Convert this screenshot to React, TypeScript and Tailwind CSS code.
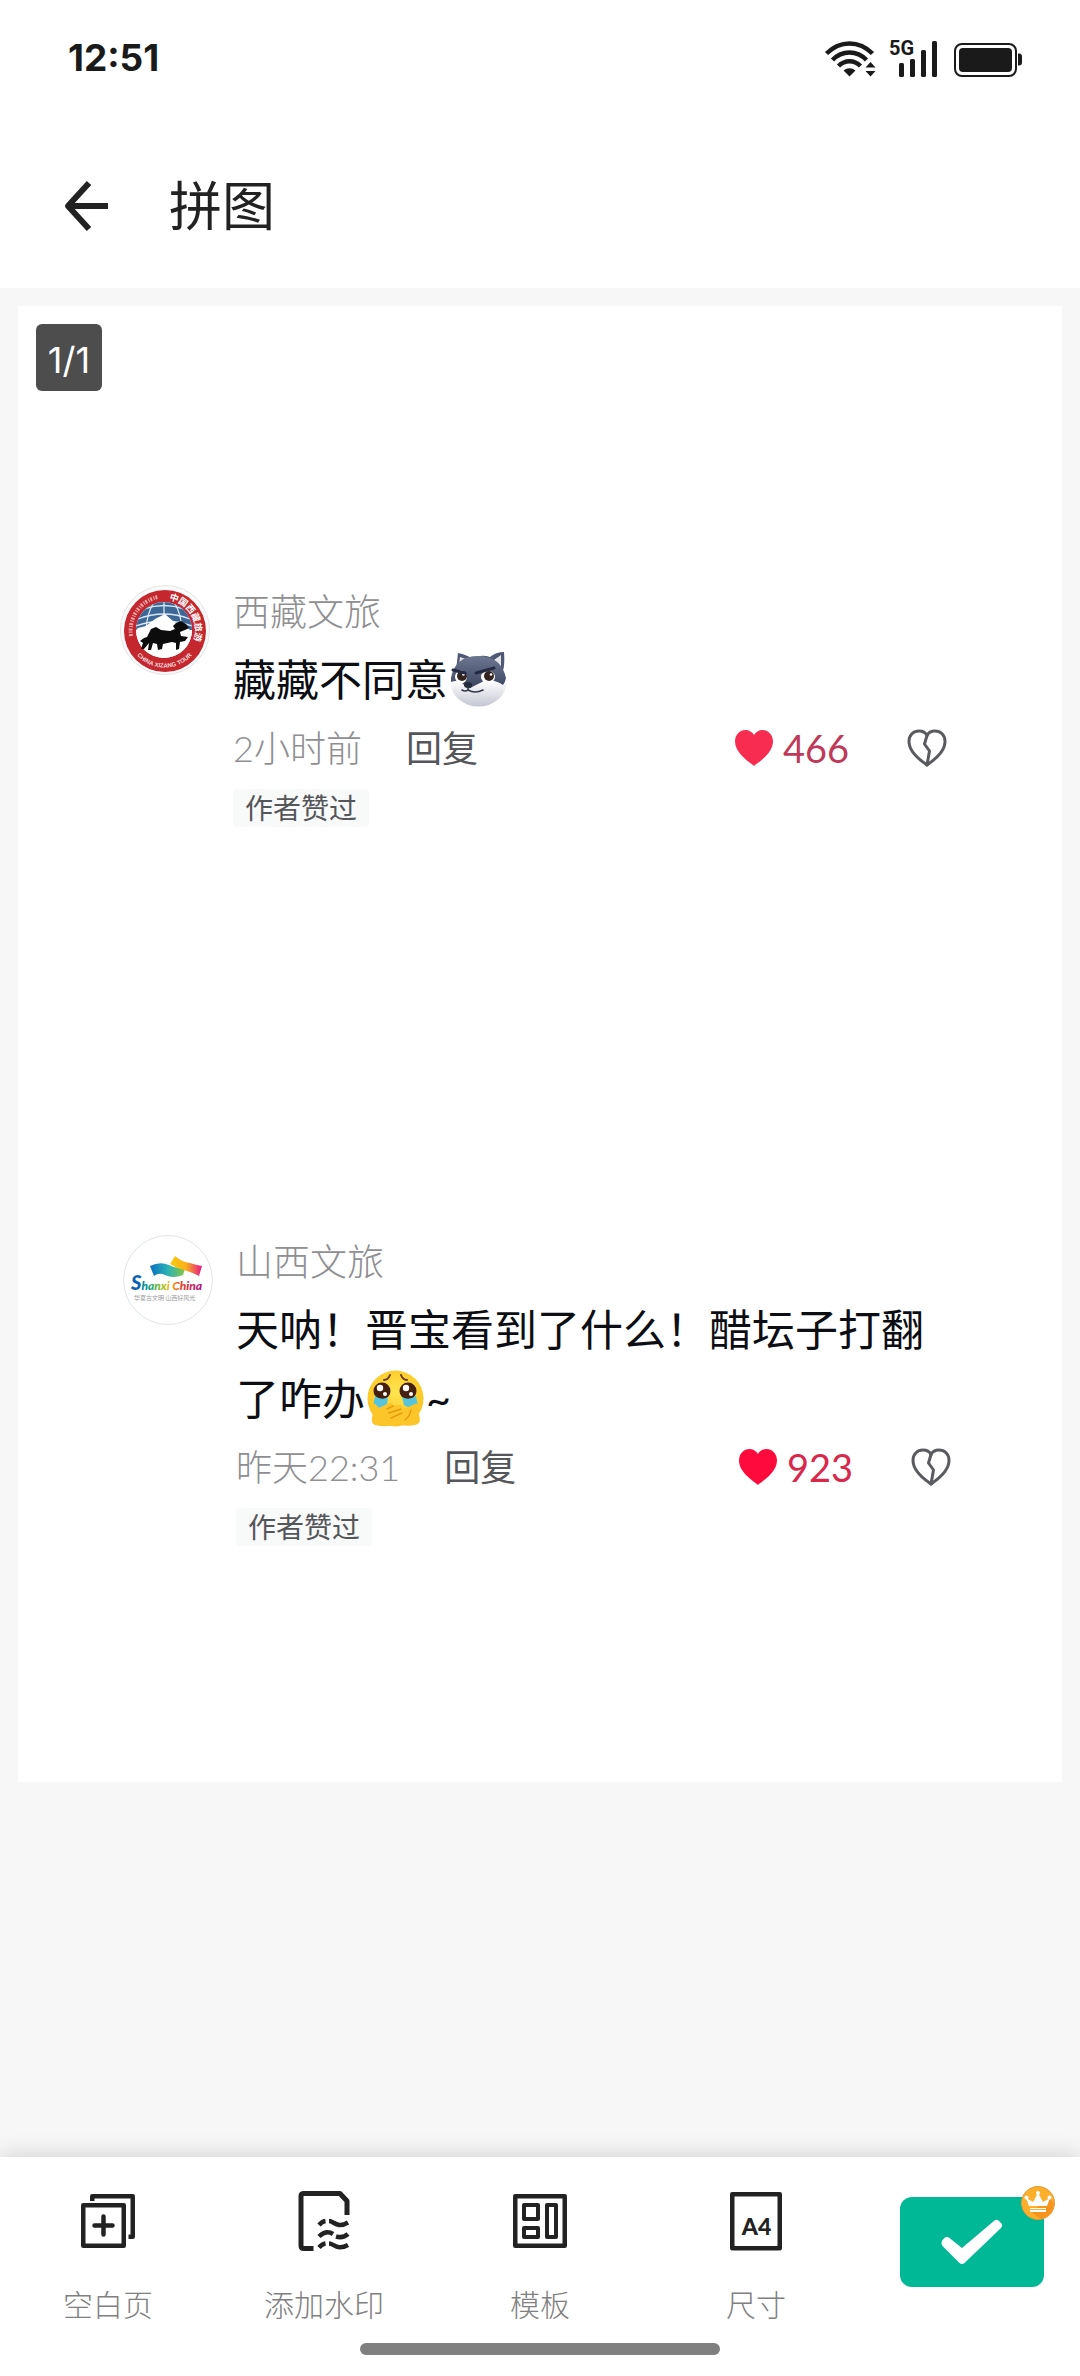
import React from 'react';

const StatusBar: React.FC = () => (
  <div className="h-[116px] pl-[68px] pr-[58px] flex items-center justify-between text-[#1a1a1a]">
    <time className="font-[Inter] font-bold text-[37px] leading-[40px]">12:51</time>
    <svg className="w-[198px] h-12" viewBox="0 -6 198 48" fill="none" role="img" aria-label="信号与电量">
      {/* wifi */}
      <g stroke="#1a1a1a" strokeWidth="4.500">
        <path d="M2.500 13.500C16 0 35 0 48.500 13.500" />
        <path d="M8.500 20C18 10 33 10 42.500 20" />
        <path d="M14.500 26C21 19.500 30 19.500 36.500 26" />
      </g>
      <path d="M25.500 36.500L19.500 30.500Q25.500 26 31.500 30.500Z" fill="#1a1a1a" />
      <path d="M46.500 22L51.500 27.500H41.500ZM46.500 36.500L41.500 31H51.500Z" fill="#1a1a1a" />
      <text x="65" y="15" fontFamily="Roboto, sans-serif" fontWeight="700" fontSize="20" fill="#1a1a1a">5G</text>
      <g fill="#1a1a1a">
        <rect x="75" y="23" width="5" height="14" rx="1.500" />
        <rect x="86" y="19" width="5" height="18" rx="1.500" />
        <rect x="97" y="10" width="5" height="27" rx="1.500" />
        <rect x="108" y="1" width="5" height="36" rx="1.500" />
        <rect x="135" y="8" width="53" height="24" rx="4" />
        <path d="M194 13.500h1q3 0 3 3v6q0 3-3 3h-1z" />
      </g>
      <rect x="131" y="4" width="61" height="32" rx="7" stroke="#1a1a1a" strokeWidth="2" />
    </svg>
  </div>
);

const XizangAvatar: React.FC = () => (
  <svg className="w-[90px] h-[90px] shrink-0 mt-[6px]" viewBox="0 0 90 90" role="img" aria-label="西藏文旅">
    <defs>
      <clipPath id="xz-globe"><circle cx="44" cy="45" r="28" /></clipPath>
      <path id="xz-top" d="M46 14.500A31.500 31.500 0 0 1 68 66" />
      <path id="xz-bottom" d="M10 59A37 37 0 0 0 79 59" />
    </defs>
    <circle cx="45" cy="45" r="44.500" fill="#fafafa" stroke="#e4e4e4" />
    <circle cx="45" cy="46" r="41" fill="#c4272e" />
    <circle cx="44" cy="45" r="28" fill="#fff" />
    <g clipPath="url(#xz-globe)">
      <rect x="14" y="15" width="60" height="30" fill="#3c6796" />
      <g fill="none" stroke="#dbe8f3" strokeWidth="1.300">
        <path d="M44 15V45M34 17Q27 28 26 45M54 17Q61 28 62 45" />
        <path d="M18 34Q44 24 70 34M24 24Q44 17 64 24M16 41Q44 31 72 41" />
      </g>
      <path d="M12 50L18 43L26 41L35 34L45 29L54 37L63 40L76 49V75H12Z" fill="#fff" />
    </g>
    <path
      d="M24 53l3-1 4-8 5-2 5 3 9 1 5-2-2-3 3-3 5-2 5 3 3 4-4 2-5 2 1 4 7 1-3 4-5 1-1 7-3 1 0-7-4-1-9 2-1 5-4 1-1-6-4-1-2 7-3 0 1-7-5 6-3 0 2-6-3-2z"
      fill="#0c0c0c"
    />
    <text fill="#fff" fontSize="9" fontWeight="700" fontFamily="'Noto Sans CJK SC', sans-serif">
      <textPath href="#xz-top" startOffset="3">中国西藏旅游</textPath>
    </text>
    <text fill="#f7dede" fontSize="6" fontWeight="700" textAnchor="middle" fontFamily="'Liberation Sans', sans-serif">
      <textPath href="#xz-bottom" startOffset="50%">CHINA XIZANG TOUR</textPath>
    </text>
    <path d="M11 51A34.500 34.500 0 0 1 38 12" fill="none" stroke="#eaa5a5" strokeWidth="4" strokeDasharray="2 1.500 1 1" />
  </svg>
);

const ShanxiAvatar: React.FC = () => (
  <svg className="w-[90px] h-[90px] shrink-0 mt-[6px]" viewBox="0 0 90 90" role="img" aria-label="山西文旅">
    <defs>
      <linearGradient id="sx-blue"><stop offset="0" stopColor="#0a6fc2" /><stop offset=".5" stopColor="#2bb3b5" /><stop offset="1" stopColor="#8cc63f" /></linearGradient>
      <linearGradient id="sx-warm"><stop offset="0" stopColor="#fbc90e" /><stop offset=".5" stopColor="#f9b01b" /><stop offset="1" stopColor="#e6188a" /></linearGradient>
      <linearGradient id="sx-text">
        <stop offset="0" stopColor="#0863b4" /><stop offset=".25" stopColor="#0d9a8c" /><stop offset=".42" stopColor="#7fbf2a" />
        <stop offset=".55" stopColor="#f5b80c" /><stop offset=".7" stopColor="#e8452c" /><stop offset="1" stopColor="#a80f7c" />
      </linearGradient>
    </defs>
    <circle cx="45" cy="45" r="44.500" fill="#fff" stroke="#dfe3e6" />
    <path d="M27 31Q37 26 46 30Q55 35 63 31L60 40Q50 44 42 40Q36 37 31 41Z" fill="url(#sx-blue)" />
    <path d="M52 21Q59 27 67 28Q73 30 79 31L76 41Q68 37 61 35Q53 33 47 29Z" fill="url(#sx-warm)" />
    <text x="8" y="55" fontFamily="Lato, sans-serif" fontStyle="italic" fontWeight="900" fontSize="12" fill="url(#sx-text)">
      <tspan fontSize="20" fill="#0863b4">S</tspan>hanxi China
    </text>
    <text x="11" y="65" fontFamily="'Noto Sans CJK SC', sans-serif" fontSize="6" fill="#9a9a9a">华夏古文明 山西好风光</text>
  </svg>
);

const WolfEmoji: React.FC = () => (
  <svg className="inline-block align-middle w-[57px] h-[57px] mx-0.5 -mt-[12px]" viewBox="0 0 57 57" role="img" aria-label="狼">
    <defs>
      <linearGradient id="wolf-face" x2="0" y2="1"><stop offset=".5" stopColor="#fdfdfe" /><stop offset="1" stopColor="#c3c5d2" /></linearGradient>
      <linearGradient id="wolf-fur" x2="0" y2="1"><stop offset="0" stopColor="#6d7791" /><stop offset="1" stopColor="#3c4560" /></linearGradient>
    </defs>
    <path d="M6 20L8 2Q17 4 21 7Q32 3 40 6Q46 1 54 1Q55 13 53 20Z" fill="#4e5873" />
    <path d="M10 6L9 14L16 8ZM51 4L44 9L51 16Z" fill="#e4e3e6" />
    <ellipse cx="28.500" cy="31" rx="28" ry="24.500" fill="url(#wolf-face)" />
    <path d="M1 27Q5 5 28 5Q51 5 56 27Q55 32 53 34Q46 29 36 29L22 36Q19 39 15 35Q9 28 1 31Z" fill="url(#wolf-fur)" />
    <ellipse cx="11" cy="26" rx="6" ry="6.500" fill="#fff" />
    <ellipse cx="38" cy="26" rx="7" ry="6.500" fill="#fff" />
    <circle cx="12" cy="25" r="5" fill="#34241f" />
    <circle cx="39" cy="25" r="5" fill="#34241f" />
    <circle cx="13.500" cy="23.500" r="1.300" fill="#fff" />
    <circle cx="41" cy="23.500" r="1.300" fill="#fff" />
    <path d="M3 19L15 22M26 22L44 17" stroke="#242b42" strokeWidth="3" strokeLinecap="round" />
    <ellipse cx="18" cy="34" rx="4" ry="3" fill="#222a3d" />
    <path d="M18 36V39Q25 43 33 39M18 39Q15 41 12 39" fill="none" stroke="#31384b" strokeWidth="1.600" strokeLinecap="round" />
  </svg>
);

const TearsEmoji: React.FC = () => (
  <svg className="inline-block align-middle w-[57px] h-[57px] mx-0.5 -mt-[12px]" viewBox="0 0 57 57" role="img" aria-label="泪目">
    <defs>
      <radialGradient id="tear-face" cx=".5" cy=".4" r=".6"><stop offset="0" stopColor="#ffe552" /><stop offset="1" stopColor="#fbc21d" /></radialGradient>
    </defs>
    <circle cx="28.500" cy="28.500" r="28" fill="url(#tear-face)" />
    <path d="M17 10Q21 10 23 5M34 5Q36 10 40 10" fill="none" stroke="#6b3a12" strokeWidth="2" strokeLinecap="round" />
    <circle cx="15" cy="21" r="8.500" fill="#45200f" />
    <circle cx="41" cy="21" r="8.500" fill="#45200f" />
    <circle cx="13" cy="18" r="3.200" fill="#fff" /><circle cx="39" cy="18" r="3.200" fill="#fff" />
    <circle cx="18" cy="24" r="2" fill="#fff" /><circle cx="44" cy="24" r="2" fill="#fff" />
    <path d="M8 26Q15 31 21 27L20 35Q13 40 6 36ZM35 27Q42 31 49 26L51 36Q44 40 37 35Z" fill="#57c4de" />
    <path d="M6 33Q9 34 12 38L22 33Q26 32 26 35L33 35Q37 36 34 39L44 36Q48 33 51 34Q53 36 51 42Q56 54 48 55Q38 57 30 54Q20 58 8 55Q3 54 6 43Q4 37 6 33Z" fill="#fcc62b" />
    <path d="M20 39L26 36M22 43L34 39M24 48L35 43M38 50Q43 46 44 40" fill="none" stroke="#e49a10" strokeWidth="1.500" strokeLinecap="round" />
  </svg>
);

const HEART = 'M20 37C17 34 1 25 1 12.500C1 5.500 6 1 11.500 1C15 1 18.500 3 20 6C21.500 3 25 1 28.500 1C34 1 39 5.500 39 12.500C39 25 23 34 20 37Z';

interface CommentProps {
  avatar: React.ReactNode;
  name: string;
  time: string;
  likes: number;
  heartClass: string;
  countClass: string;
  className: string;
  children: React.ReactNode;
}

const Comment: React.FC<CommentProps> = ({ avatar, name, time, likes, heartClass, countClass, className, children }) => (
  <article className={`flex gap-[23px] ${className}`}>
    {avatar}
    <div className="flex-1 min-w-0">
      <h2 className="text-[37px] leading-[66px] font-light text-[#8f8f92]">{name}</h2>
      <p className="text-[43px] leading-[69px] text-[#0d0e14]">{children}</p>
      <div className="flex items-center h-[68px] text-[36px] leading-[68px]">
        <span className="font-light text-[#8f8f92]">{time}</span>
        <button className="ml-[44px] text-[#55565a]">回复</button>
        <button className={`ml-auto flex items-center gap-[9px] text-[38px] ${countClass}`} aria-label={`赞 ${likes}`}>
          <svg className="w-10 h-[38px]" viewBox="0 0 40 38"><path d={HEART} className={heartClass} /></svg>
          <span>{likes}</span>
        </button>
        <button className="ml-[58px]" aria-label="不喜欢">
          <svg className="w-10 h-[38px]" viewBox="0 0 40 38" fill="none" stroke="#5a5b5f" strokeWidth="3" strokeLinejoin="round" strokeLinecap="round">
            <path d="M20 36C17 33.500 2 25 2 12.500C2 6 6.500 2 12 2C15.500 2 18.500 3.500 20 6.500C21.500 3.500 24.500 2 28 2C33.500 2 38 6 38 12.500C38 25 23 33.500 20 36Z" />
            <path d="M20 6.500L17.500 15L22.500 22L20 36" />
          </svg>
        </button>
      </div>
      <span className="mt-[7px] inline-block rounded px-3 bg-[#f8f9f9] text-[28px] leading-[38px] text-[#55565a]">作者赞过</span>
    </div>
  </article>
);

const BlankPageIcon = () => (
  <svg className="w-[60px] h-[60px]" viewBox="0 0 60 60" fill="none" stroke="#222" strokeWidth="4.500" strokeLinejoin="round">
    <rect x="5.250" y="14.250" width="40.500" height="40.500" />
    <path d="M14.250 10V5.250H54.750V45.750H50.500" />
    <path d="M25.500 25.500V43.500M16.500 34.500H34.500" strokeLinecap="round" />
  </svg>
);

const WatermarkIcon = () => (
  <svg className="w-[60px] h-[60px]" viewBox="0 0 60 60" fill="none" stroke="#222" strokeWidth="5" strokeLinejoin="round">
    <path d="M19.500 57.500H10Q7 57.500 7 54.500V5Q7 2.500 10 2.500H46L53 10V24" />
    <g strokeWidth="4.500">
      <path d="M25 34Q28 30.500 31.500 30M35 30C40 30 43 38 54 31.500" />
      <path d="M25 45.500Q32 38.500 39 43M42 45.500Q49 47.500 54 43" />
      <path d="M25 56.500Q28 53 31.500 52.500M35 52.500C40 52.500 43 60 54 54" />
    </g>
  </svg>
);

const TemplateIcon = () => (
  <svg className="w-[60px] h-[60px]" viewBox="0 0 60 60" fill="none" stroke="#222" strokeWidth="4.500" strokeLinejoin="round">
    <rect x="5.250" y="5.250" width="49.500" height="49.500" />
    <g strokeWidth="4">
      <rect x="14" y="14" width="14" height="14" />
      <rect x="14" y="37" width="14" height="9" />
      <rect x="37" y="14" width="9" height="32" />
    </g>
  </svg>
);

const SizeIcon = () => (
  <svg className="w-[60px] h-[60px]" viewBox="0 0 60 60" fill="none">
    <rect x="6.250" y="3.250" width="47.500" height="54" stroke="#222" strokeWidth="4.500" strokeLinejoin="round" />
    <text x="30.500" y="43.500" textAnchor="middle" fontFamily="Lato, sans-serif" fontWeight="900" fontSize="23" fill="#222">A4</text>
  </svg>
);

const tools = [
  { label: '空白页', Icon: BlankPageIcon },
  { label: '添加水印', Icon: WatermarkIcon },
  { label: '模板', Icon: TemplateIcon },
  { label: '尺寸', Icon: SizeIcon },
];

const Toolbar: React.FC = () => (
  <footer className="relative bg-white shadow-[0_-3px_20px_rgba(0,0,0,0.14)]">
    <nav className="grid grid-cols-5 pt-[34px]">
      {tools.map(({ label, Icon }) => (
        <button key={label} className="flex flex-col items-center gap-[33px]">
          <Icon />
          <span className="text-[30px] leading-10 font-light text-[#808080]">{label}</span>
        </button>
      ))}
      <div className="flex justify-center pt-[6px]">
        <button className="relative w-36 h-[90px] rounded-xl bg-[#00b896] flex items-center justify-center" aria-label="完成">
          <svg className="w-[62px] h-[46px]" viewBox="0 0 62 46" fill="#fff">
            <path d="M1.500 21L4 18.500Q6 17 8.500 19L21 29L53.500 1.500Q56 0 58 2L60.500 4.500Q62 7 60 9L23.500 44Q21 46 18.500 44L1.500 27Q-0.500 24 1.500 21Z" />
          </svg>
          <svg className="absolute -top-[11px] -right-[11px] w-[34px] h-[34px]" viewBox="0 0 34 34">
            <circle cx="17" cy="17" r="16.500" fill="#fdaf2c" stroke="#e29c3a" />
            <path d="M29 12L33 18Q31 31 20 33L10 26Z" fill="#f7941d" />
            <path d="M5 12L8 20H26L29 12L22 16L17 7L12 16ZM9 22H25V26H9Z" fill="#fff" />
            <circle cx="5.500" cy="11.500" r="2" fill="#fff" /><circle cx="17" cy="7" r="2" fill="#fff" /><circle cx="28.500" cy="11.500" r="2" fill="#fff" />
            <path d="M9 23.500H25" stroke="#fdaf2c" />
          </svg>
        </button>
      </div>
    </nav>
    <div className="mx-auto mt-[19px] mb-[21px] w-1/3 h-3 rounded-full bg-[#808080]" />
  </footer>
);

export default function App() {
  return (
    <div className="min-h-screen flex flex-col bg-white font-[Lato,'Noto_Sans_CJK_SC',sans-serif]">
      <StatusBar />
      <header className="h-[172px] pt-2 pl-[60px] flex items-center gap-[57px]">
        <button aria-label="返回">
          <svg className="w-[52px] h-[52px]" viewBox="0 0 52 52" fill="none" stroke="#222" strokeWidth="6">
            <path d="M29 3L8 26L29 49M8 26H48" strokeLinejoin="round" />
          </svg>
        </button>
        <h1 className="text-[53px] leading-[60px] text-[#222]">拼图</h1>
      </header>

      <main className="flex-1 bg-[#f7f7f7] p-[18px]">
        <section className="relative bg-white aspect-[1044/1476] pt-[273px]">
          <span className="absolute left-[18px] top-[18px] w-[66px] h-[67px] pt-1 rounded-md bg-[#4d4d4d] flex items-center justify-center font-[Inter] text-[36px] text-white">
            1/1
          </span>
          <Comment
            avatar={<XizangAvatar />}
            name="西藏文旅"
            time="2小时前"
            likes={466}
            heartClass="fill-[#f82c51]"
            countClass="text-[#bf3a58]"
            className="pl-[102px] pr-[115px]"
          >
            藏藏不同意<WolfEmoji />
          </Comment>
          <Comment
            avatar={<ShanxiAvatar />}
            name="山西文旅"
            time="昨天22:31"
            likes={923}
            heartClass="fill-[#ff0a3c]"
            countClass="text-[#da284c]"
            className="mt-[402px] pl-[105px] pr-[111px]"
          >
            天呐！晋宝看到了什么！醋坛子打翻了咋办<TearsEmoji />~
          </Comment>
        </section>
      </main>

      <Toolbar />
    </div>
  );
}
